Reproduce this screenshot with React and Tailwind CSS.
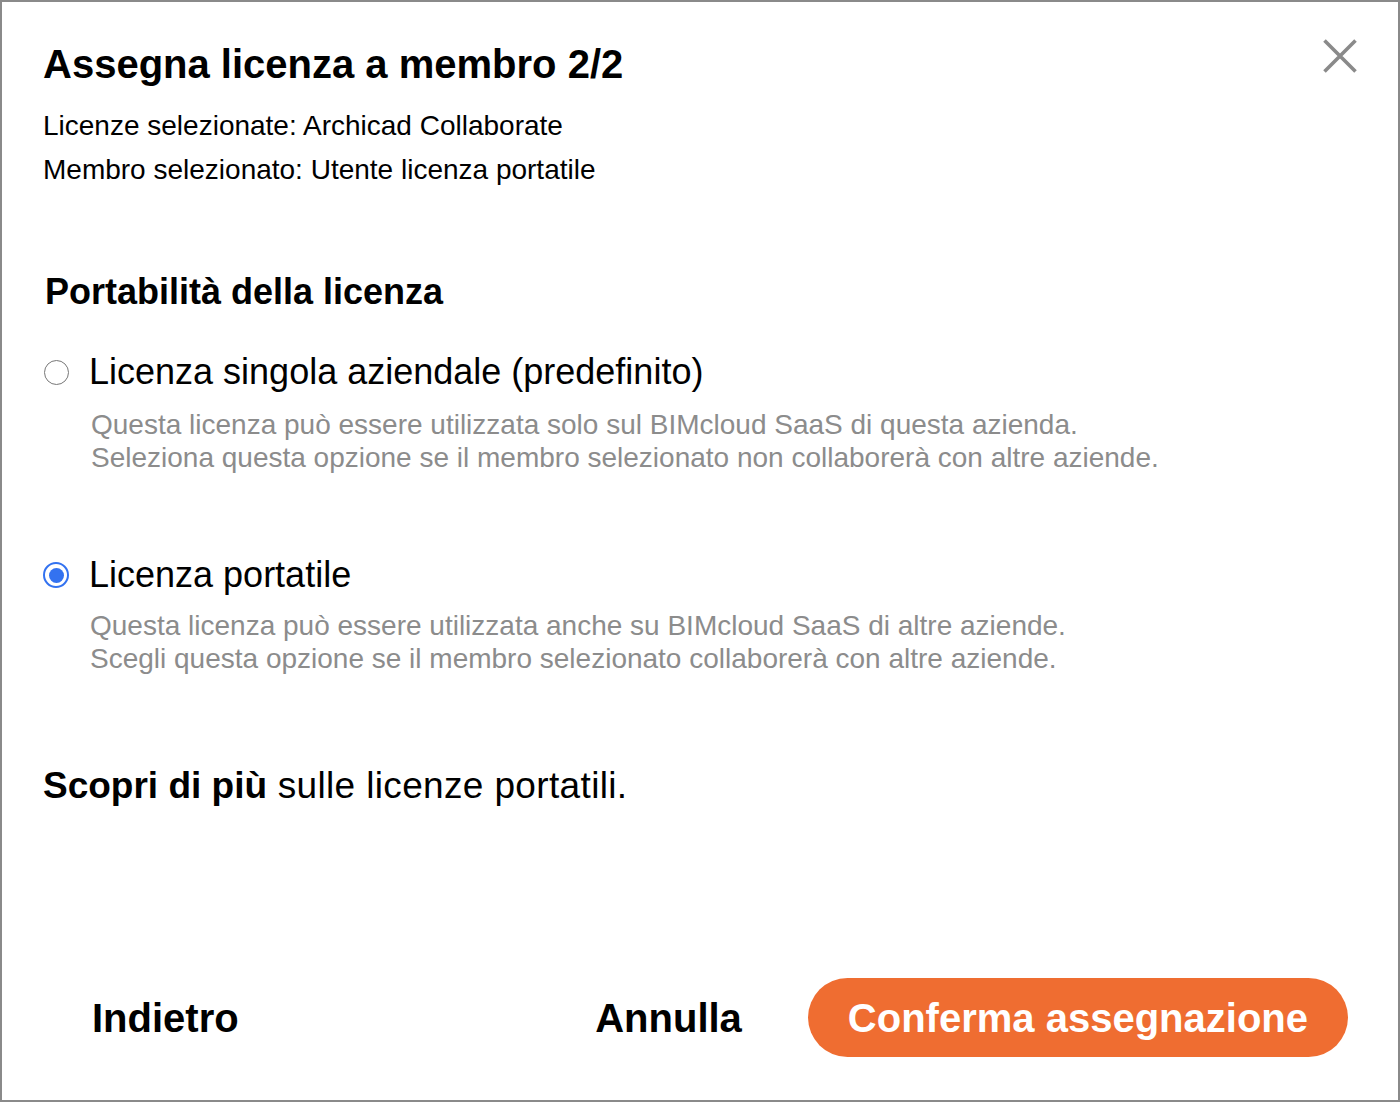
import React, { useState } from 'react';

const options = [
  {
    id: 'single',
    label: 'Licenza singola aziendale (predefinito)',
    lines: [
      'Questa licenza può essere utilizzata solo sul BIMcloud SaaS di questa azienda.',
      'Seleziona questa opzione se il membro selezionato non collaborerà con altre aziende.',
    ],
    descClass: 'mt-[14px] ml-[2px]',
  },
  {
    id: 'portable',
    label: 'Licenza portatile',
    lines: [
      'Questa licenza può essere utilizzata anche su BIMcloud SaaS di altre aziende.',
      'Scegli questa opzione se il membro selezionato collaborerà con altre aziende.',
    ],
    descClass: 'mt-[12px] ml-[1px]',
  },
];

const Radio = ({ checked }) =>
  checked ? (
    <span className="flex h-[26px] w-[26px] items-center justify-center rounded-full border-2 border-[#3372f0] bg-white">
      <span className="h-[15px] w-[15px] rounded-full bg-[#3372f0]" />
    </span>
  ) : (
    <span className="block h-[25px] w-[25px] rounded-full border-[1.5px] border-[#777777] bg-white" />
  );

const App = () => {
  const [selected, setSelected] = useState('portable');

  return (
    <div
      className="flex h-[1102px] w-[1400px] flex-col border-2 border-[#8a8a8a] bg-white pt-[38px] pl-[41px] pr-[41px] pb-[43px] text-black"
      style={{ fontFamily: '"Liberation Sans", Arial, sans-serif' }}
    >
      <div className="flex items-start justify-between">
        <h1 className="text-[40px] leading-[48px] font-bold">Assegna licenza a membro 2/2</h1>
        <button className="-mt-[1px] text-[#8a8a8a]" aria-label="Chiudi">
          <svg width="34" height="34" viewBox="0 0 34 34" fill="none" stroke="currentColor" strokeWidth="3.6">
            <path d="M1.5 1.5 L32.5 32.5 M32.5 1.5 L1.5 32.5" />
          </svg>
        </button>
      </div>

      <p className="mt-[16px] text-[28px] leading-[44px]">Licenze selezionate: Archicad Collaborate</p>
      <p className="text-[28px] leading-[44px]">Membro selezionato: Utente licenza portatile</p>

      <h2 className="mt-[78px] ml-[2px] text-[36px] leading-[44px] font-bold">Portabilità della licenza</h2>

      {options.map((opt, i) => (
        <div
          key={opt.id}
          className={`${i === 0 ? 'mt-[36px]' : 'mt-[79px]'} flex cursor-pointer`}
          onClick={() => setSelected(opt.id)}
        >
          <div className="flex h-[44px] w-[26px] items-center justify-center">
            <Radio checked={selected === opt.id} />
          </div>
          <div className="ml-[20px]">
            <div className="text-[36px] leading-[44px]">{opt.label}</div>
            <div className={`${opt.descClass} text-[28px] leading-[33px] text-[#8c8c8c]`}>
              {opt.lines.map((l) => (
                <div key={l}>{l}</div>
              ))}
            </div>
          </div>
        </div>
      ))}

      <p className="mt-[89px] text-[37px] leading-[44px]">
        <span className="font-bold">Scopri di più</span>
        <span className="tracking-[0.35px]"> sulle licenze portatili.</span>
      </p>

      <div className="mt-auto flex items-center justify-between">
        <button className="ml-[49px] text-[40px] leading-[48px] font-bold">Indietro</button>
        <div className="flex items-center gap-[66px] pr-[9px]">
          <button className="text-[40px] leading-[48px] font-bold">Annulla</button>
          <button className="flex h-[79px] items-center rounded-full bg-[#ef6d31] px-[40px] text-[40px] leading-[48px] font-bold text-white">
            Conferma assegnazione
          </button>
        </div>
      </div>
    </div>
  );
};

export default App;
